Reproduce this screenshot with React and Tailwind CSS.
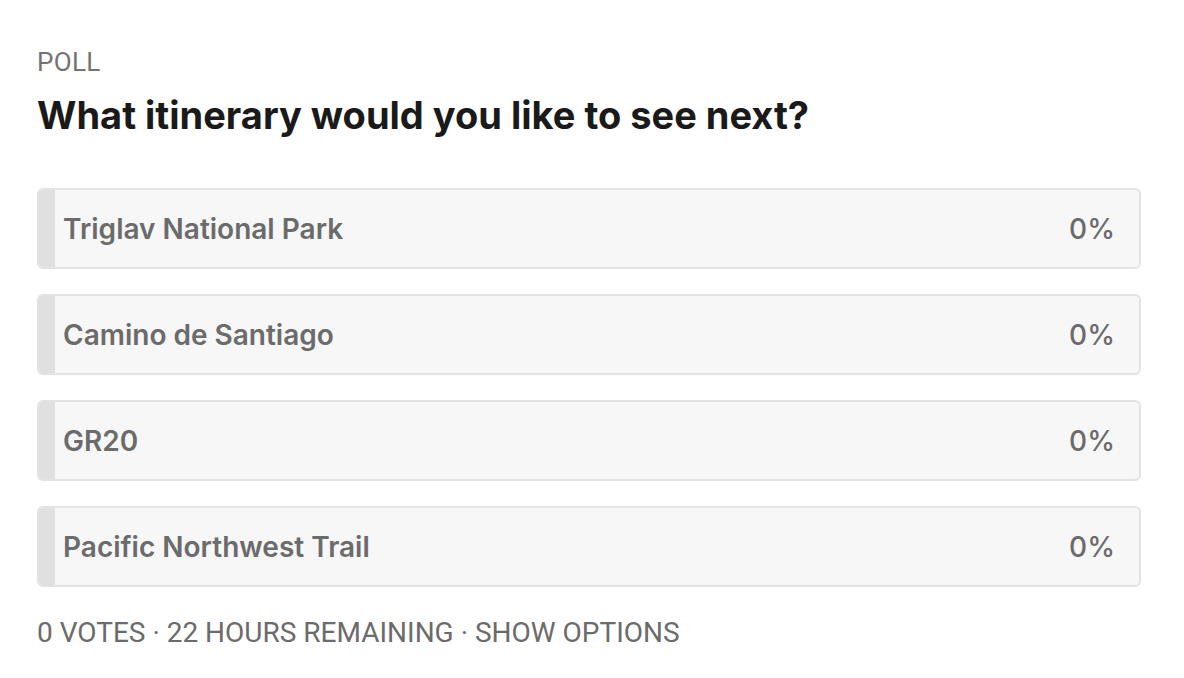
import React from 'react';

const options = [
  { label: 'Triglav National Park', pct: 0 },
  { label: 'Camino de Santiago', pct: 0 },
  { label: 'GR20', pct: 0 },
  { label: 'Pacific Northwest Trail', pct: 0 },
];

function PollOption({ label, pct }) {
  return (
    <div className="relative flex items-center h-[81px] rounded-[6px] border-2 border-[#e3e3e3] bg-[#f7f7f7] overflow-hidden">
      <div className="self-stretch w-[16px] bg-[#e0e0e0] shrink-0" />
      <span className="flex-1 pl-[8px] text-[28px] font-semibold text-[#6b6b6b] font-['Inter',sans-serif]">{label}</span>
      <span className="pr-[24px] text-[28px] font-medium text-[#6b6b6b] font-['Inter',sans-serif]">{pct}%</span>
    </div>
  );
}

export default function App() {
  return (
    <div className="w-[1184px] h-[678px] bg-white px-[37px] pt-[46px]">
      <div className="text-[26px] leading-[32px] text-[#737373] font-['Roboto',sans-serif] tracking-[0.3px]">POLL</div>
      <h1 className="mt-[14px] text-[38px] leading-[46px] font-bold text-[#1a1a1a] font-['Inter',sans-serif]">
        What itinerary would you like to see next?
      </h1>
      <div className="mt-[50px] w-[1104px] flex flex-col gap-[25px]">
        {options.map((o) => (
          <PollOption key={o.label} {...o} />
        ))}
      </div>
      <div className="mt-[30px] text-[28px] leading-[32px] text-[#6b6b6b] font-['Roboto',sans-serif]">
        0 VOTES · 22 HOURS REMAINING · SHOW OPTIONS
      </div>
    </div>
  );
}
